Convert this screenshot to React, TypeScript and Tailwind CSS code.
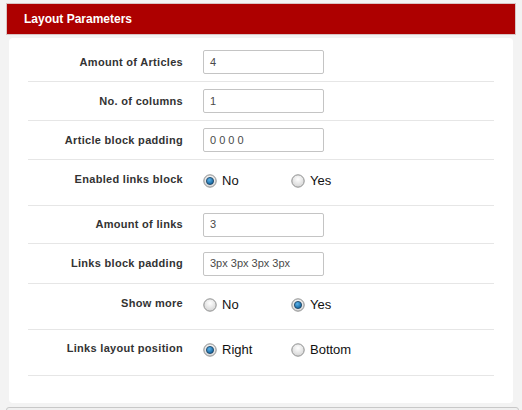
import React from "react";

function Radio({ checked }: { checked: boolean }) {
  return (
    <svg width="14" height="14" viewBox="0 0 14 14" className="shrink-0">
      <defs>
        <radialGradient id="rg" cx="50%" cy="35%" r="65%">
          <stop offset="0%" stopColor="#ffffff" />
          <stop offset="100%" stopColor="#d4d4d4" />
        </radialGradient>
        <radialGradient id="bg" cx="40%" cy="35%" r="70%">
          <stop offset="0%" stopColor="#5cb3ea" />
          <stop offset="100%" stopColor="#0b5a94" />
        </radialGradient>
      </defs>
      <circle cx="7" cy="7" r="6.2" fill="url(#rg)" stroke="#8e8f8f" strokeWidth="1" />
      {checked && <circle cx="7" cy="7" r="3.6" fill="url(#bg)" stroke="#1c3e5c" strokeWidth="0.8" />}
    </svg>
  );
}

function InputRow({ label, value, h = "h-[39px]" }: { label: string; value: string; h?: string }) {
  return (
    <div className={`flex items-center border-b border-[#e6e6e6] ${h}`}>
      <div className="w-[155px] text-right text-[11px] font-bold text-[#333] tracking-[0.3px] whitespace-nowrap">{label}</div>
      <div className="ml-[20px] w-[121px] h-[24px] border border-[#c4c4c4] rounded-[2px] bg-white flex items-center px-[6px] text-[11px] text-[#4a4a4a]">
        {value}
      </div>
    </div>
  );
}

function RadioRow({ label, options, selected, pt = "pt-[12px]" }: { label: string; options: string[]; selected: number; pt?: string }) {
  return (
    <div className={`h-[46px] border-b border-[#e6e6e6] ${pt}`}>
      <div className="flex items-center h-[18px]">
        <div className="w-[155px] text-right text-[11px] font-bold text-[#333] tracking-[0.3px] whitespace-nowrap -mt-[3px]">{label}</div>
        <div className="ml-[20px] flex">
          {options.map((o, i) => (
            <div key={o} className="w-[88px] flex items-center gap-[5px] text-[13px] text-[#111]">
              <Radio checked={i === selected} />
              <span>{o}</span>
            </div>
          ))}
        </div>
      </div>
    </div>
  );
}

export default function App() {
  return (
    <div
      className="w-[522px] h-[410px] bg-[#f3f3f3] overflow-hidden relative"
      style={{ fontFamily: '"Liberation Sans", Arial, sans-serif' }}
    >
      <div className="pt-[3px] px-[6px]">
        <div className="h-[32px] bg-[#ad0000] border border-[#d9c4c4] flex items-center pl-[17px] text-white text-[12px] font-bold">
          Layout Parameters
        </div>
        <div className="mx-[3px] mt-[3px] h-[365px] bg-white rounded-[4px] px-[19px] pt-[5px]">
          <InputRow label="Amount of Articles" value="4" />
          <InputRow label="No. of columns" value="1" />
          <InputRow label="Article block padding" value="0 0 0 0" />
          <RadioRow label="Enabled links block" options={["No", "Yes"]} selected={0} />
          <InputRow label="Amount of links" value="3" h="h-[38px]" />
          <InputRow label="Links block padding" value="3px 3px 3px 3px" h="h-[40px]" />
          <RadioRow label="Show more" options={["No", "Yes"]} selected={1} />
          <RadioRow label="Links layout position" options={["Right", "Bottom"]} selected={0} pt="pt-[11px]" />
        </div>
      </div>
      <div className="absolute left-[6px] right-[3px] top-[407px] h-[10px] border border-[#c8c8c8] rounded-[3px] bg-[#f0f0f0]" />
    </div>
  );
}
